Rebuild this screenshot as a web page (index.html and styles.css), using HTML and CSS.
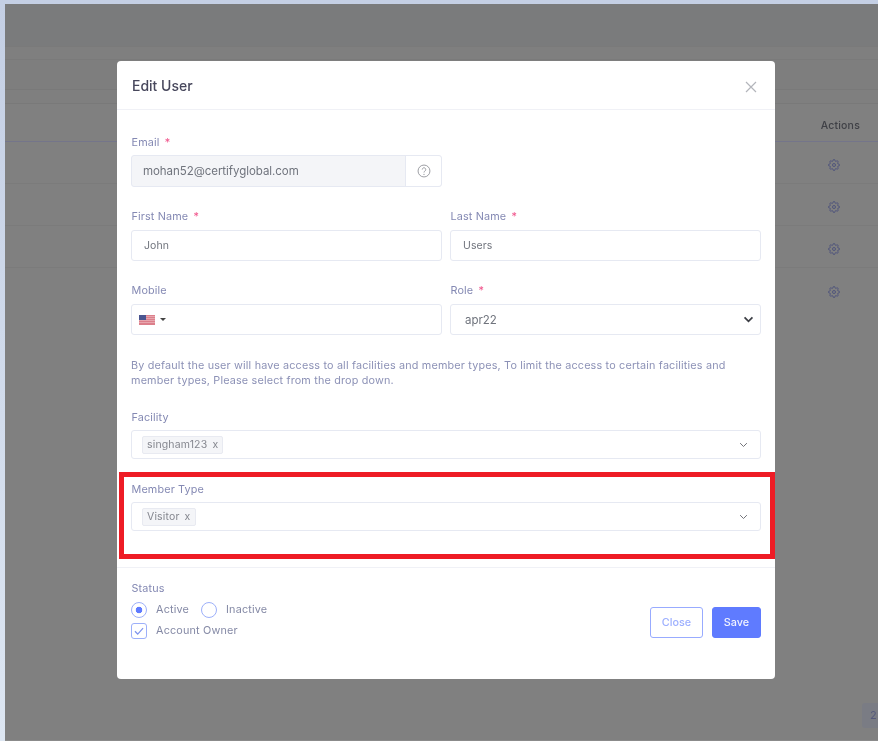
FILE: index.html
```html
<!DOCTYPE html>
<html lang="en">
<head>
<meta charset="utf-8">
<title>Edit User</title>
<link rel="stylesheet" href="styles.css">
</head>
<body>
<div class="frame">
  <div class="app">
    <div class="app-header"></div>
    <div class="app-strip"></div>
    <div class="app-tools"></div>
    <div class="app-gap"></div>
    <div class="table-head"><span class="actions-title">Actions</span></div>
    <div class="table-row"><svg class="gear" viewBox="0 0 24 24"><use href="#gear"/></svg></div>
    <div class="table-row"><svg class="gear" viewBox="0 0 24 24"><use href="#gear"/></svg></div>
    <div class="table-row"><svg class="gear" viewBox="0 0 24 24"><use href="#gear"/></svg></div>
    <div class="table-row last"><svg class="gear" viewBox="0 0 24 24"><use href="#gear"/></svg></div>
    <div class="pager"><span class="page-box">2</span></div>
  </div>
</div>

<svg class="defs" width="0" height="0">
  <symbol id="gear" viewBox="0 0 24 24">
    <path d="M19.4 15a1.65 1.65 0 0 0 .33 1.82l.06.06a2 2 0 0 1 0 2.83 2 2 0 0 1-2.83 0l-.06-.06a1.65 1.65 0 0 0-1.82-.33 1.65 1.65 0 0 0-1 1.51V21a2 2 0 0 1-2 2 2 2 0 0 1-2-2v-.09A1.65 1.65 0 0 0 9 19.4a1.65 1.65 0 0 0-1.82.33l-.06.06a2 2 0 0 1-2.83 0 2 2 0 0 1 0-2.83l.06-.06a1.65 1.65 0 0 0 .33-1.82 1.65 1.65 0 0 0-1.51-1H3a2 2 0 0 1-2-2 2 2 0 0 1 2-2h.09A1.65 1.65 0 0 0 4.6 9a1.65 1.65 0 0 0-.33-1.82l-.06-.06a2 2 0 0 1 0-2.83 2 2 0 0 1 2.83 0l.06.06a1.65 1.65 0 0 0 1.82.33H9a1.65 1.65 0 0 0 1-1.51V3a2 2 0 0 1 2-2 2 2 0 0 1 2 2v.09a1.65 1.65 0 0 0 1 1.51 1.65 1.65 0 0 0 1.82-.33l.06-.06a2 2 0 0 1 2.83 0 2 2 0 0 1 0 2.83l-.06.06a1.65 1.65 0 0 0-.33 1.82V9a1.65 1.65 0 0 0 1.51 1H21a2 2 0 0 1 2 2 2 2 0 0 1-2 2h-.09a1.65 1.65 0 0 0-1.51 1z" fill="none" stroke="currentColor" stroke-width="1.8" stroke-linejoin="round"/>
    <circle cx="12" cy="12" r="3" fill="none" stroke="currentColor" stroke-width="1.8"/>
  </symbol>
  <symbol id="chev" viewBox="0 0 12 8">
    <path d="M1.5 1.5L6 6l4.5-4.5" fill="none" stroke="currentColor" stroke-width="1.3"/>
  </symbol>
</svg>

<div class="modal">
  <header class="modal-head">
    <h2 class="modal-title">Edit User</h2>
    <svg class="close-x" viewBox="0 0 12 12"><path d="M1 1l10 10M11 1L1 11" stroke="currentColor" stroke-width="1.2" fill="none"/></svg>
  </header>
  <div class="modal-body">
    <div class="grid">
      <div class="field">
        <label class="label">Email <span class="req">*</span></label>
        <div class="input disabled with-addon">
          <span class="value email">mohan52@certifyglobal.com</span>
          <span class="addon"><svg class="help" viewBox="0 0 16 16"><circle cx="8" cy="8" r="6.8" fill="none" stroke="currentColor" stroke-width="1"/><path d="M6 6.3a2 2 0 1 1 3.1 1.7c-.7.5-1.1.9-1.1 1.7" fill="none" stroke="currentColor" stroke-width="1"/><circle cx="8" cy="11.8" r=".7" fill="currentColor"/></svg></span>
        </div>
      </div>
      <div></div>
      <div class="field">
        <label class="label tight">First Name <span class="req">*</span></label>
        <div class="input"><span class="value">John</span></div>
      </div>
      <div class="field">
        <label class="label tight">Last Name <span class="req">*</span></label>
        <div class="input"><span class="value">Users</span></div>
      </div>
      <div class="field">
        <label class="label tight">Mobile</label>
        <div class="input phone">
          <svg class="flag" viewBox="0 0 16 10">
            <rect width="16" height="10" fill="#dc7f8b"/>
            <path d="M0 1.5h16M0 3.5h16M0 5.5h16M0 7.5h16" stroke="#eab0b8" stroke-width=".8"/>
            <rect width="7" height="5" fill="#4a5590"/>
          </svg>
          <span class="caret"></span>
        </div>
      </div>
      <div class="field">
        <label class="label tight">Role <span class="req">*</span></label>
        <div class="input role"><span class="value big">apr22</span>
          <svg class="chev-bold" viewBox="0 0 12 8"><path d="M1.5 1.5L6 6l4.5-4.5" fill="none" stroke="currentColor" stroke-width="2"/></svg>
        </div>
      </div>
    </div>
    <p class="hint">By default the user will have access to all facilities and member types, To limit the access to certain facilities and member types, Please select from the drop down.</p>
    <div class="field wide">
      <label class="label">Facility</label>
      <div class="select"><span class="tag">singham123 <i>x</i></span><svg class="chev" viewBox="0 0 12 8"><use href="#chev"/></svg></div>
    </div>
    <div class="field wide second">
      <label class="label">Member Type</label>
      <div class="select"><span class="tag">Visitor <i>x</i></span><svg class="chev" viewBox="0 0 12 8"><use href="#chev"/></svg></div>
    </div>
  </div>
  <footer class="modal-foot">
    <div class="status">
      <div class="label status-label">Status</div>
      <div class="check-row">
        <span class="radio on"></span><span class="opt">Active</span>
        <span class="radio"></span><span class="opt">Inactive</span>
      </div>
      <div class="check-row">
        <span class="checkbox"><svg viewBox="0 0 12 12"><path d="M2.5 6.2l2.4 2.4 4.6-5" fill="none" stroke="currentColor" stroke-width="1"/></svg></span><span class="opt">Account Owner</span>
      </div>
    </div>
    <div class="buttons">
      <button class="btn outline">Close</button>
      <button class="btn solid">Save</button>
    </div>
  </footer>
</div>
<div class="highlight"></div>
</body>
</html>
```
FILE: styles.css
```css
* { box-sizing: border-box; }
html, body { margin: 0; height: 744px; overflow: hidden; }
body {
  font-family: "Inter", "Liberation Sans", sans-serif;
  background: #fff;
  position: relative;
  filter: blur(0.45px);
}
.frame {
  height: 741px;
  padding: 4px 0 0 5px;
  background: linear-gradient(#c4cfe4, #dde6f2);
}
.app { height: 737px; background: #808080; display: flex; flex-direction: column; border-bottom: 1px solid #8b8b8b; }
.app-header { height: 42px; background: #7a7b7c; }
.app-strip { height: 13px; background: #7f7f7f; border-top: 1px solid #7a7a7a; }
.app-tools { height: 31px; background: #7e7e7e; border-top: 1px solid #7a7a7a; border-bottom: 1px solid #797979; }
.app-gap { height: 13px; background: #7f7f7f; }
.table-head {
  height: 39px;
  display: flex; align-items: center; justify-content: flex-end;
  padding: 5px 18px 0 0;
  border-top: 1px solid #797979;
  border-bottom: 1px solid #74758a;
}
.actions-title { font-size: 10.5px; font-weight: 500; color: #3f4046; letter-spacing: .2px; }
.table-row {
  height: 42px;
  display: flex; align-items: center; justify-content: flex-end;
  padding: 5px 38.5px 0 0;
  border-bottom: 1px solid #7b7b7b;
}
.table-row.last { border-bottom: 0; }
.gear { width: 12px; height: 12px; color: #4b507c; }
.pager { margin-top: auto; display: flex; justify-content: flex-end; padding-bottom: 12px; }
.page-box {
  width: 16px; height: 25px; overflow: hidden;
  background: #7a7c84; color: #565a7c;
  font-size: 11px; line-height: 25px; padding-left: 8px; border-radius: 3px 0 0 3px;
}
.defs { position: absolute; }

.modal {
  position: absolute;
  left: 117px; top: 61px;
  width: 658px; height: 618px;
  background: #fff;
  border-radius: 4px;
  display: flex; flex-direction: column;
}
.modal-head {
  height: 49px;
  padding: 0 14px 0 15px;
  display: flex; align-items: center; justify-content: space-between;
  border-bottom: 1px solid #f0f1f6;
}
.modal-title { margin: 0; font-size: 14px; font-weight: 500; color: #47475c; }
.close-x { width: 12px; height: 12px; color: #b3b5bb; margin: 3px 4px 0 0; }
.modal-body { padding: 25px 14px 0 14px; height: 457px; }
.grid { display: grid; grid-template-columns: 311px 311px; column-gap: 8px; row-gap: 23px; }
.label { display: block; font-size: 10.8px; color: #8489b3; line-height: 15px; letter-spacing: .15px; margin-bottom: 5px; padding-left: .5px; }
.label.tight { line-height: 13px; margin-bottom: 7px; }
.req { color: #f0538a; margin-left: 2px; }
.input {
  height: 31px;
  border: 1px solid #e6e9f2;
  border-radius: 3px;
  display: flex; align-items: center;
  padding-left: 12px;
  background: #fff;
}
.value { font-size: 10.5px; color: #70747d; letter-spacing: .1px; }
.value.big { font-size: 11.5px; letter-spacing: 0; }
.email { font-size: 11.5px; letter-spacing: -.05px; }
.disabled { height: 32px; background: #f4f5f8; padding-left: 11px; justify-content: space-between; padding-right: 0; }
.addon {
  width: 36px; height: 100%;
  border-left: 1px solid #e6e9f2;
  background: #fff; border-radius: 0 3px 3px 0;
  display: flex; align-items: center; justify-content: center;
}
.help { width: 14px; height: 14px; color: #8f9197; }
.phone { padding-left: 7px; gap: 5px; }
.flag { width: 16px; height: 10px; }
.caret { width: 0; height: 0; border: 3px solid transparent; border-top-color: #444; border-bottom: 0; }
.role { justify-content: space-between; padding-right: 6px; padding-left: 14px; }
.chev-bold { width: 11px; height: 7px; color: #3d3f45; }
.hint { margin: 23px 0 0; font-size: 10.8px; line-height: 15px; color: #8c91b6; width: 625px; letter-spacing: .18px; }
.field.wide { margin-top: 22px; }
.field.second { margin-top: 23px; }
.select {
  height: 29px;
  border: 1px solid #e6e9f2;
  border-radius: 3px;
  display: flex; align-items: center; justify-content: space-between;
  padding: 1px 12px 0 10px;
}
.tag {
  background: #f4f5f8;
  border: 1px solid #e8eaf1;
  border-radius: 2px;
  font-size: 10.5px;
  color: #85878f;
  padding: 1px 4px 1px 4px;
  line-height: 14px;
  letter-spacing: .15px;
}
.tag i { font-style: normal; margin-left: 2px; }
.chev { width: 9px; height: 6px; color: #6f7076; }
.modal-foot {
  flex: 1;
  border-top: 1px solid #f0f1f6;
  padding: 14px 14px 0;
  display: flex; justify-content: space-between; align-items: flex-start;
}
.status-label { line-height: 13px; margin-bottom: 4px; }
.check-row { display: flex; align-items: center; height: 21px; }
.opt { font-size: 10.8px; color: #8489a5; letter-spacing: .18px; margin: 0 12px 0 9px; }
.radio { width: 16px; height: 16px; border-radius: 50%; border: 1.5px solid #9db0fa; background: #fff; }
.radio.on { background: radial-gradient(circle, #5f7bff 0 3px, #fff 3.6px); }
.checkbox { width: 16px; height: 16px; border: 1.5px solid #9db0fa; border-radius: 3px; color: #7d93ee; display: flex; }
.buttons { display: flex; gap: 9px; margin-top: 25px; }
.btn {
  height: 31px;
  font-family: inherit;
  font-size: 10.8px;
  font-weight: 500;
  border-radius: 3px;
  padding: 0;
}
.outline { width: 53px; background: #fff; border: 1.5px solid #98abff; color: #9cafff; }
.solid { width: 49px; background: #5f7bff; border: 1px solid #5f7bff; color: #f2f4ff; }
.highlight {
  position: absolute;
  left: 119px; top: 472px;
  width: 656px; height: 87px;
  border: 5px solid #ee1c25;
  pointer-events: none;
}
```
